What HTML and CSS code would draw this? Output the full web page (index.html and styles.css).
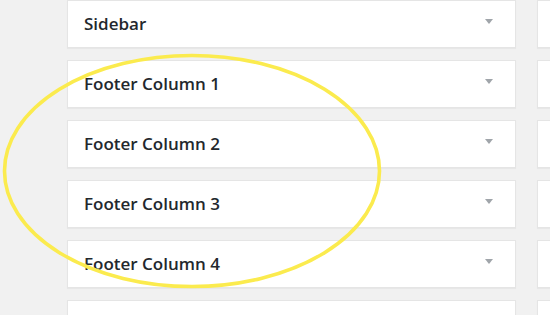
FILE: index.html
```html
<!DOCTYPE html>
<html>
<head>
  <title>Widgets</title>
  <link rel="stylesheet" href="styles.css">
</head>
<body>
  <div class="widgets-wrap">
    <div class="widget-column">
      <div class="sidebar-box">
        <h2>Sidebar</h2>
        <span class="toggle-arrow"></span>
      </div>
      <div class="sidebar-box">
        <h2>Footer Column 1</h2>
        <span class="toggle-arrow"></span>
      </div>
      <div class="sidebar-box">
        <h2>Footer Column 2</h2>
        <span class="toggle-arrow"></span>
      </div>
      <div class="sidebar-box">
        <h2>Footer Column 3</h2>
        <span class="toggle-arrow"></span>
      </div>
      <div class="sidebar-box">
        <h2>Footer Column 4</h2>
        <span class="toggle-arrow"></span>
      </div>
      <div class="sidebar-box"></div>
    </div>

    <div class="widget-column side">
      <div class="sidebar-box"></div>
      <div class="sidebar-box"></div>
      <div class="sidebar-box"></div>
      <div class="sidebar-box"></div>
      <div class="sidebar-box"></div>
      <div class="sidebar-box"></div>
    </div>
  </div>

  <!-- highlight annotation -->
  <svg class="highlight" width="550" height="315" viewBox="0 0 550 315">
    <ellipse cx="192" cy="171" rx="187.5" ry="115.5" fill="none" stroke="#fbeb4e" stroke-width="3.6"/>
  </svg>
</body>
</html>
```

FILE: styles.css
```css
* {
  margin: 0;
  padding: 0;
  box-sizing: border-box;
}

body {
  font-family: 'Open Sans', 'Liberation Sans', sans-serif;
  background: #f1f1f1;
  width: 550px;
  height: 315px;
  overflow: hidden;
  position: relative;
}

.widgets-wrap {
  display: flex;
  gap: 21px;
  padding-left: 67px;
}

.widget-column {
  width: 449px;
  flex-shrink: 0;
  display: flex;
  flex-direction: column;
  gap: 12px;
}

.sidebar-box {
  height: 48px;
  background: white;
  border: 1px solid #e5e5e5;
  box-shadow: 0 1px 1px rgba(0,0,0,0.04);
  display: flex;
  align-items: center;
  justify-content: space-between;
  padding: 0 22px 0 16px;
}

.sidebar-box h2 {
  font-size: 17px;
  font-weight: 600;
  color: #23282d;
  margin-top: -1px;
}

.toggle-arrow {
  width: 0;
  height: 0;
  border-left: 4px solid transparent;
  border-right: 4px solid transparent;
  border-top: 5px solid #a0a5aa;
  margin-top: -6px;
}

.highlight {
  position: absolute;
  top: 0;
  left: 0;
  pointer-events: none;
}
```
